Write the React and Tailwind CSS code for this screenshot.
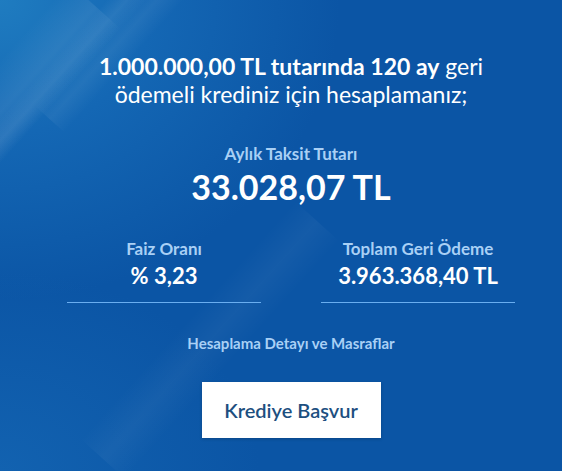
export default function App() {
  return (
    <div className="relative h-[471px] w-[562px] overflow-hidden bg-[#0b55a5] font-['Lato','Open_Sans',sans-serif] text-white">
      {/* background glow and diagonal light streaks */}
      <div className="pointer-events-none absolute inset-0 bg-[radial-gradient(ellipse_340px_300px_at_0%_0%,#1f7cc0_0%,#1467b4_45%,transparent_100%)]" />
      <div className="pointer-events-none absolute inset-0 bg-[radial-gradient(ellipse_260px_200px_at_0%_100%,#1262b0_0%,transparent_100%)]" />
      <div className="pointer-events-none absolute -left-[60px] -top-[40px] h-[360px] w-[70px] rotate-[42deg] bg-gradient-to-r from-transparent via-white/[0.08] to-transparent" />
      <div className="pointer-events-none absolute left-[40px] -top-[70px] h-[300px] w-[30px] rotate-[42deg] bg-gradient-to-r from-transparent via-white/[0.08] to-transparent" />
      <div className="pointer-events-none absolute left-[110px] -top-[90px] h-[240px] w-[40px] rotate-[42deg] bg-gradient-to-r from-transparent via-white/[0.06] to-transparent" />
      <div className="pointer-events-none absolute left-[180px] top-[180px] h-[320px] w-[60px] rotate-[42deg] bg-gradient-to-r from-transparent via-white/[0.04] to-transparent" />

      <div className="relative flex flex-col items-center pl-[20px] pt-[52px]">
        <p className="text-center text-[23px] leading-[28px]">
          <span className="font-bold">1.000.000,00 TL tutarında 120 ay</span> geri
          <br />
          ödemeli krediniz için hesaplamanız;
        </p>

        <div className="mt-[35px] text-[17px] font-bold leading-[22px] text-[#a9d0f5]">Aylık Taksit Tutarı</div>
        <div className="mt-[2px] text-[34px] font-bold leading-[40px]">33.028,07 TL</div>

        <div className="mt-[31px] flex gap-[60px]">
          <div className="flex w-[194px] flex-col items-center border-b border-[#6aaef0] pb-[12px]">
            <div className="text-[17px] font-bold leading-[22px] text-[#a9d0f5]">Faiz Oranı</div>
            <div className="mt-[2px] text-[22px] font-bold leading-[28px]">% 3,23</div>
          </div>
          <div className="flex w-[194px] flex-col items-center border-b border-[#6aaef0] pb-[12px]">
            <div className="text-[17px] font-bold leading-[22px] text-[#a9d0f5]">Toplam Geri Ödeme</div>
            <div className="mt-[2px] text-[22px] font-bold leading-[28px]">3.963.368,40 TL</div>
          </div>
        </div>

        <div className="mt-[30px] text-[15px] font-bold leading-[20px] text-[#a9d0f5]">Hesaplama Detayı ve Masraflar</div>

        <button className="mt-[29px] flex h-[56px] w-[179px] items-center justify-center bg-white text-[20px] font-semibold text-[#1d4f7f] shadow-[0_1px_3px_rgba(0,0,0,0.2)]">
          Krediye Başvur
        </button>
      </div>
    </div>
  );
}
